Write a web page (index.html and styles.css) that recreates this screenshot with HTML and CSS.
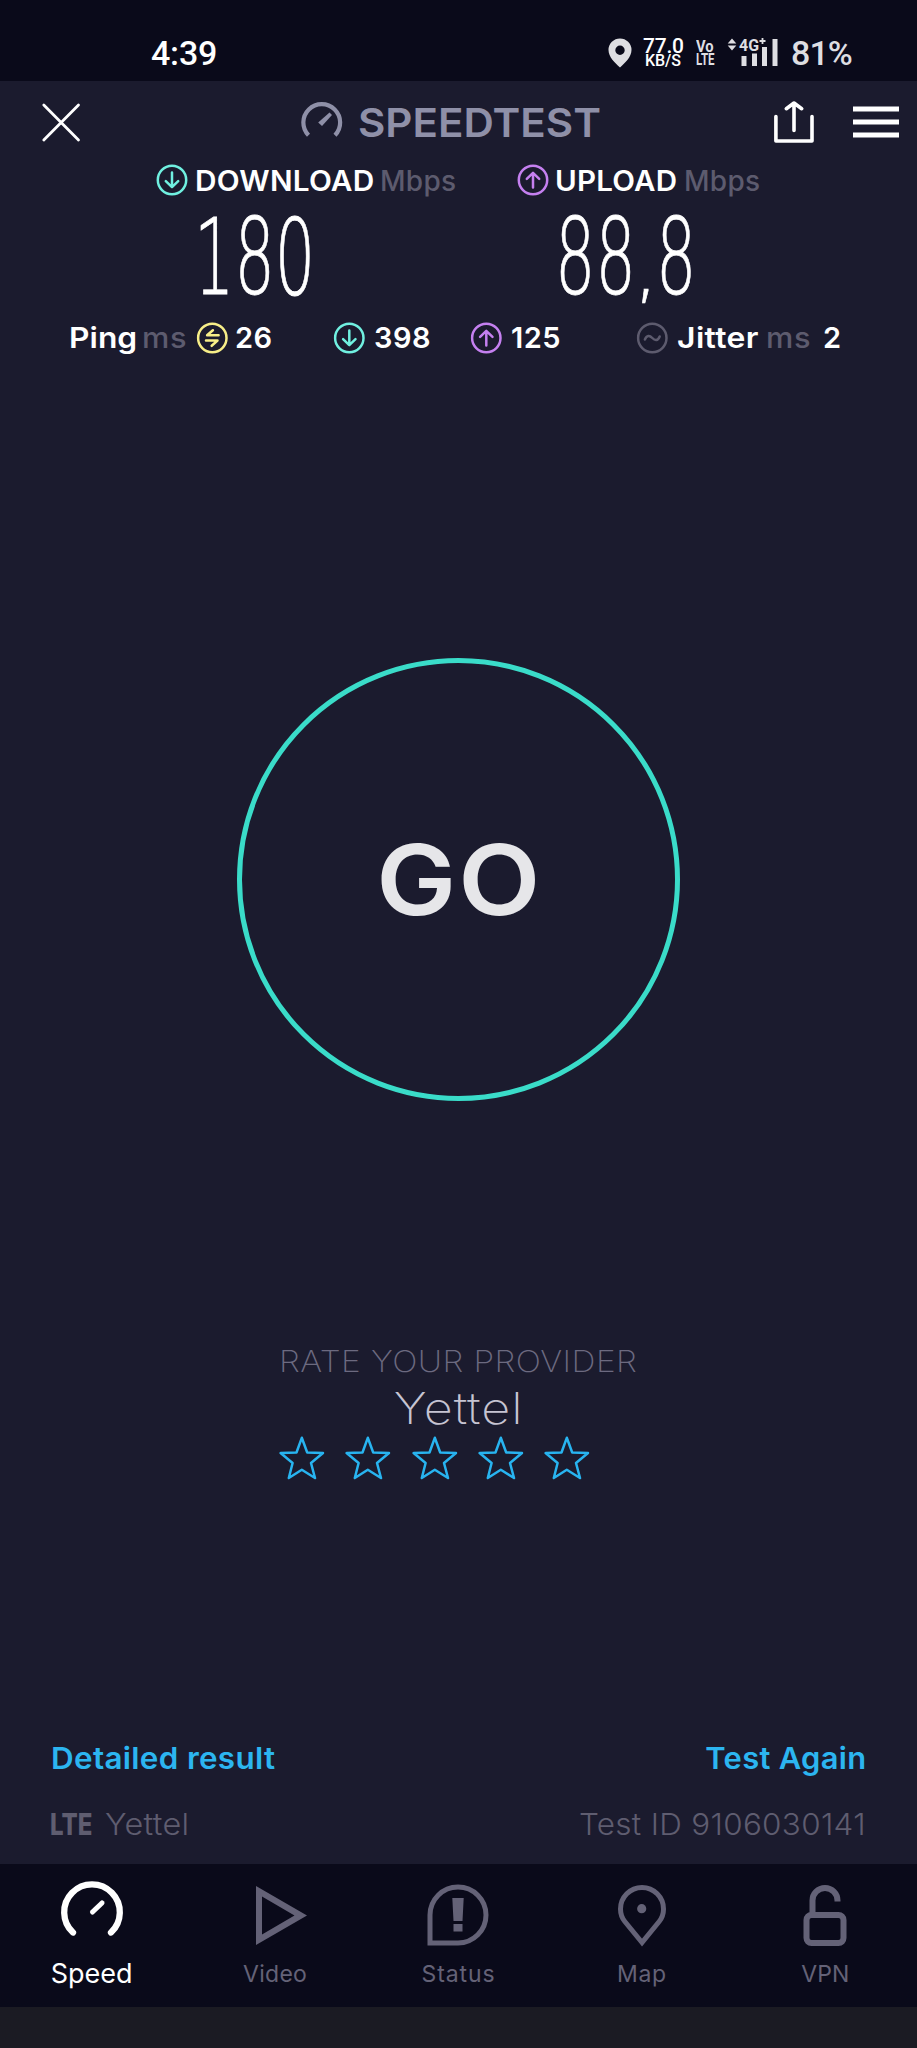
FILE: index.html
```html
<!DOCTYPE html>
<html lang="en">
<head>
<meta charset="utf-8">
<title>Speedtest</title>
<link rel="stylesheet" href="styles.css">
</head>
<body>
<svg class="defs" aria-hidden="true">
  <symbol id="down" viewBox="0 0 32 32"><circle cx="16" cy="16" r="14.2"/><path d="M16 8.5V23M9.8 17.2L16 23.2L22.2 17.2"/></symbol>
  <symbol id="up" viewBox="0 0 32 32"><circle cx="16" cy="16" r="14.2"/><path d="M16 23.5V9M9.8 14.8L16 8.8L22.2 14.8"/></symbol>
  <symbol id="swap" viewBox="0 0 32 32"><circle cx="16" cy="16" r="14.2"/><path d="M22.3 13.3H10.8L16.6 8.2M9.7 18.6H21.2L15.4 23.8"/></symbol>
  <symbol id="wave" viewBox="0 0 32 32"><circle cx="16" cy="16" r="14.2"/><path d="M8.6 17.5C10.5 13 13.2 13 16 16S21.500 19 23.400 14.500"/></symbol>
  <symbol id="star" viewBox="0 0 46 46"><path d="M22.800 2.800L28.200 17.500L44 18L32 28L36 43L22.800 34.800L9.800 43L13.600 28L1.600 18L17.500 17.500Z"/></symbol>
</svg>

<div class="status-bar">
  <span class="clock">4:39</span>
  <svg class="icon" width="24" height="30" viewBox="0 0 24 30"><path fill="#dedee2" fill-rule="evenodd" d="M12 .5A11.500 11.500 0 0 0 .5 12C.5 19 7 25 12 29.500C17 25 23.500 19 23.500 12A11.500 11.500 0 0 0 12 .5ZM12 7.500A4.700 4.700 0 1 1 12 16.900A4.700 4.700 0 0 1 12 7.500Z"/></svg>
  <span class="net"><b class="net-num">77.0</b><b class="net-unit">KB/S</b></span>
  <span class="volte"><b class="vo">Vo</b><b class="vlte">LTE</b></span>
  <svg class="icon" width="52" height="32" viewBox="0 0 52 32" fill="#dedee2">
    <path d="M5 1.500L9.300 6.500H.7ZM5 13.500L9.300 8.500H.7Z"/>
    <path d="M14.500 19H19.500V29H14.500ZM25 16.500H30V29H25ZM35 10H40V29H35ZM45.500 2H50.500V29H45.500Z" />
    <text class="cell" x="12" y="13.500" textLength="20" lengthAdjust="spacingAndGlyphs">4G</text>
    <path d="M32.500 4H38.500M35.500 1V7" stroke="#dedee2" stroke-width="1.800"/>
  </svg>
  <span class="battery">81%</span>
</div>

<header class="top-bar">
  <svg class="icon" width="38" height="39" viewBox="0 0 38 39" fill="none" stroke="#fff" stroke-width="2.800" stroke-linecap="round"><path d="M1.800 2L36.500 37M36.500 2L1.800 37"/></svg>
  <svg class="icon gauge" width="42" height="42" viewBox="0 0 42 42" fill="none" stroke="#8f90a8"><path stroke-width="4.200" d="M7.500 34.300A18.400 18.400 0 1 1 34 34.300"/><path fill="#8f90a8" stroke="none" d="M28.500 11.500L31 14L21 25L17.200 21.500Z"/></svg>
  <span class="brand">SPEEDTEST</span>
  <svg class="icon" width="40" height="42" viewBox="0 0 40 42" fill="none" stroke="#fff" stroke-width="3.600" stroke-linecap="round" stroke-linejoin="round"><path d="M1.900 15.500V40H38V15.500M20 29.500V2.500M12.300 7.700L20 2L27.700 7.700"/></svg>
  <svg class="icon" width="46" height="32" viewBox="0 0 46 32" fill="#fff"><path d="M0 .5H46V5.500H0ZM0 13.500H46V18.500H0ZM0 26.500H46V31.500H0Z"/></svg>
</header>

<main>
  <div class="heads">
    <svg class="ring teal"><use href="#down"/></svg><span class="h dl">DOWNLOAD</span><span class="h unit">Mbps</span>
    <svg class="ring purple"><use href="#up"/></svg><span class="h ul">UPLOAD</span><span class="h unit">Mbps</span>
  </div>
  <div class="speeds"><span class="num">180</span><span class="num">88<span class="comma">,</span>8</span></div>
  <div class="latency">
    <span class="p ping">Ping</span><span class="p ms">ms</span>
    <svg class="ring yellow"><use href="#swap"/></svg><span class="p">26</span>
    <svg class="ring teal"><use href="#down"/></svg><span class="p">398</span>
    <svg class="ring purple"><use href="#up"/></svg><span class="p">125</span>
    <svg class="ring gray"><use href="#wave"/></svg><span class="p jitter">Jitter</span><span class="p ms">ms</span><span class="p">2</span>
  </div>
  <div class="go"><span class="go-text">GO</span></div>
  <div class="rate">RATE YOUR PROVIDER</div>
  <div class="provider">Yettel</div>
  <div class="stars">
    <svg><use href="#star"/></svg><svg><use href="#star"/></svg><svg><use href="#star"/></svg><svg><use href="#star"/></svg><svg><use href="#star"/></svg>
  </div>
  <div class="links"><span class="detail">Detailed result</span><span class="again">Test Again</span></div>
  <div class="meta"><span class="lte">LTE</span><span class="isp">Yettel</span><span class="test-id">Test ID 9106030141</span></div>
</main>

<nav class="tabs">
  <div class="tab active"><svg viewBox="0 0 64 64" fill="none" stroke="#fff" stroke-linecap="round"><path stroke-width="6.300" d="M13 54.500A27.800 27.800 0 1 1 51 54.500"/><path stroke-width="5" d="M32.500 34L42 25"/></svg><span>Speed</span></div>
  <div class="tab"><svg viewBox="0 0 64 64"><path fill="#646277" fill-rule="evenodd" d="M13 8L64 37.500L13 67ZM19 18.500V56.500L51.500 37.500Z"/></svg><span class="video">Video</span></div>
  <div class="tab"><svg viewBox="0 0 64 64" fill="none" stroke="#646277" stroke-width="5"><path d="M4 65V37A28 28 0 1 1 32 65Z"/><path fill="#646277" stroke="none" d="M26.300 20H37.700L36.500 43H27.500ZM27.500 46H36.500V53.500H27.500Z"/></svg><span class="stat">Status</span></div>
  <div class="tab"><svg viewBox="0 0 64 64" fill="none" stroke="#646277" stroke-width="5"><path d="M32 64.500L14.800 43.500C11 38.800 10.500 34.500 10.500 31A21.500 21.500 0 0 1 53.500 31C53.500 34.500 53 38.800 49.200 43.500Z"/><circle cx="31.700" cy="30.700" r="4.600" fill="#646277" stroke="none"/></svg><span class="map">Map</span></div>
  <div class="tab"><svg viewBox="0 0 64 64" fill="none" stroke="#646277" stroke-width="6"><rect x="13.500" y="37" width="37" height="28" rx="5"/><path d="M19.500 36V22.500A12.500 12.500 0 0 1 44.500 22.500V23.500"/></svg><span>VPN</span></div>
</nav>
<div class="home-bar"></div>
</body>
</html>
```
FILE: styles.css
```css
* { box-sizing: border-box; }
body {
  margin: 0;
  width: 917px;
  background: #1b1b2e;
  color: #fff;
  font-family: Inter, "Liberation Sans", sans-serif;
  white-space: nowrap;
  font-kerning: normal;
}
svg { display: block; overflow: visible; }
.defs { display: none; }

.status-bar {
  display: grid;
  grid-template-columns: 457px 35px 53px 31px 64px 61px;
  align-items: center;
  height: 81px;
  padding: 25px 0 0 151px;
  background: #0a0a1a;
  font-family: Roboto, sans-serif;
}
.clock { font: 500 34px/56px Roboto, sans-serif; letter-spacing: -.2px; }
.battery { font: 500 34px/56px Roboto, sans-serif; letter-spacing: -.9px; color: #dedee2; }
.net, .volte { display: flex; flex-direction: column; }
.net b, .volte b { font-weight: 500; }
.net-num { font-size: 21px; line-height: 16px; letter-spacing: -.2px; }
.net-unit { font-size: 16px; line-height: 14px; margin-left: 2px; letter-spacing: -.1px; }
.volte { color: #dedee2; }
.volte b { font-weight: 700; font-size: 16px; line-height: 13px; transform-origin: 0 50%; }
.volte .vo { transform: scaleX(.92); }
.volte .vlte { transform: scaleX(.72); }
.cell { font: 700 17px Roboto, sans-serif; stroke: #0a0a1a; stroke-width: 2px; paint-order: stroke; }

.top-bar {
  display: grid;
  grid-template-columns: 259px 57px 416px 79px 46px;
  align-items: center;
  height: 82px;
  padding-left: 42px;
}
.brand {
  width: max-content;
  padding-top: 1px;
  font-size: 40px;
  font-weight: 600;
  line-height: 50px;
  color: #8f90a8;
  transform: scaleX(1.052);
  transform-origin: 0 50%;
}

.heads {
  display: grid;
  grid-template-columns: 39px 185px 137px 38px 129px 78px;
  align-items: center;
  height: 32px;
  padding: 0 0 1px 156px;
}
.ring { width: 32px; height: 32px; fill: none; stroke-width: 2.5px; stroke-linecap: round; stroke-linejoin: round; }
.teal { stroke: #70f0e0; }
.purple { stroke: #c580f0; }
.yellow { stroke: #f7ee88; }
.gray { stroke: #5d5b6e; }
.h { width: max-content; font-size: 28px; font-weight: 500; line-height: 32px; padding-top: 2px; transform-origin: 0 50%; }
.dl { font-weight: 600; letter-spacing: .2px; transform: scaleX(1.063); }
.ul { font-weight: 600; letter-spacing: .2px; transform: scaleX(1.055); }
.unit { letter-spacing: .3px; color: #5d5b6e; }

.speeds {
  display: grid;
  grid-template-columns: 361px 200px;
  height: 122px;
  padding-left: 194px;
}
.num {
  width: max-content;
  font: 200 105px/126px "DejaVu Sans", "DejaVu Sans Light", sans-serif;
  -webkit-text-stroke: .8px #fff;
  transform: scaleX(.605);
  transform-origin: 0 50%;
}
.comma { display: inline-block; transform: scale(1.3, .75); transform-origin: 50% 77%; }

.latency {
  display: grid;
  grid-template-columns: 73px 56px 37px 100px 39px 98px 39px 127px 39px 89px 57px 20px;
  align-items: center;
  height: 41px;
  padding-left: 68px;
}
.p { width: max-content; font-size: 29px; font-weight: 600; line-height: 40px; letter-spacing: .5px; padding-left: 1px; transform-origin: 0 50%; }
.latency .ring { transform: translateX(-.7px); }
.ping { letter-spacing: 0; transform: scaleX(1.095); }
.jitter { letter-spacing: .3px; transform: scaleX(1.1); }
.ms { font-weight: 500; letter-spacing: .5px; color: #5d5b6e; transform: scaleX(1.06); }

.go {
  display: flex;
  align-items: center;
  justify-content: center;
  width: 443px;
  height: 443px;
  margin: 300px auto 0;
  border: 5px solid #3adcc9;
  border-radius: 50%;
}
.go-text { font-size: 98px; font-weight: 600; letter-spacing: 2px; margin-right: -2px; color: #e6e6e9; transform: scaleX(1.09); }

.rate, .provider { width: max-content; margin: 0 auto; font-weight: 200; }
.rate { margin-top: 240px; font-size: 30px; line-height: 40px; letter-spacing: .4px; color: #6c6a80; transform: scaleX(1.112); }
.provider { font-size: 44px; line-height: 54px; letter-spacing: .8px; color: #c6c4d2; transform: scaleX(1.145); }
.stars { display: flex; gap: 20.3px; padding-left: 279px; }
.stars svg { width: 46px; height: 46px; fill: none; stroke: #28b4f0; stroke-width: 2.5px; stroke-linejoin: round; }

.links {
  display: flex;
  justify-content: space-between;
  margin-top: 257px;
  padding: 0 51px;
  font-size: 30px;
  font-weight: 600;
  line-height: 40px;
  color: #2cb5f0;
}
.detail { letter-spacing: .3px; transform: scaleX(1.047); transform-origin: 0 50%; }
.again { letter-spacing: .3px; transform: scaleX(1.03); transform-origin: 100% 50%; }
.meta {
  display: grid;
  grid-template-columns: 55px 474px 290px;
  height: 41px;
  margin: 26px 0 19px;
  padding-left: 50px;
  font-size: 30px;
  font-weight: 300;
  line-height: 41px;
  color: #5f5d70;
}
.meta span { width: max-content; transform-origin: 0 50%; }
.meta .lte { font-weight: 800; transform: scaleX(.8); }
.meta .isp { letter-spacing: .3px; transform: scaleX(1.08); }
.meta .test-id { letter-spacing: .3px; transform: scaleX(1.047); }

.tabs {
  display: grid;
  grid-template-columns: repeat(5, 1fr);
  height: 143px;
  padding-top: 14px;
  background: #0a0a1a;
}
.tab { display: flex; flex-direction: column; align-items: center; gap: 17px; font-size: 23px; line-height: 30px; color: #646277; }
.tab svg { width: 64px; height: 64px; }
.active { font-size: 27px; line-height: 29px; color: #fff; }
.stat { letter-spacing: .9px; }
.map { letter-spacing: .6px; }
.video { letter-spacing: .3px; }
.home-bar { height: 41px; background: #1b1b23; }
```
